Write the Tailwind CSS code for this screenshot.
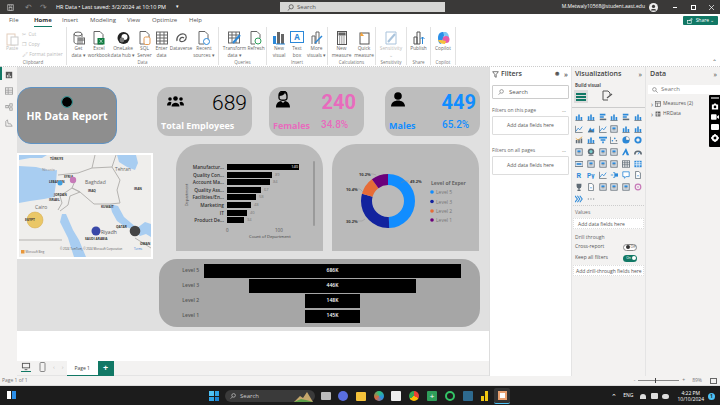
<!DOCTYPE html>
<html lang="en">
<head>
  <meta charset="UTF-8">
  <title>HR Data - Power BI Desktop</title>
  <script src="https://cdn.jsdelivr.net/npm/@tailwindcss/browser@4"></script>
</head>
<body class="w-[720px] h-[405px] overflow-hidden bg-white font-['Open_Sans',sans-serif] text-[#555]">

<!-- Title bar -->
<header class="h-[14px] bg-[#3a3938] flex items-center text-white text-[5.5px] relative">
  <svg class="ml-[7px] w-[7px] h-[7px]" viewBox="0 0 10 10" fill="none" stroke="#bbb"><rect x="1" y="1" width="8" height="8"/><rect x="3" y="5" width="4" height="4"/><path d="M3 1v2h4V1"/></svg>
  <span class="ml-[11px] text-[#888] text-[8px] leading-none">↶</span>
  <span class="ml-[8px] text-[#888] text-[8px] leading-none">↷</span>
  <span class="ml-[9px] w-[120px] whitespace-nowrap">HR Data • Last saved: 3/2/2024 at 10:10 PM</span>
  <span class="text-[5px]">▾</span>
  <div class="absolute left-[280px] top-[2px] w-[165px] h-[10px] bg-[#d6d6d4] flex items-center text-[#555] text-[6px] pl-[7px]">
    <svg class="w-[7px] h-[7px] mr-[3px]" viewBox="0 0 10 10" fill="none" stroke="#444"><circle cx="6" cy="4" r="3"/><path d="M4 6.500 1 9.500"/></svg>Search
  </div>
  <div class="ml-auto flex items-center">
    <span class="text-[5px] whitespace-nowrap">M.Metwaly10568@student.aast.edu</span>
    <svg class="ml-[4px] w-[9px] h-[9px]" viewBox="0 0 10 10"><circle cx="5" cy="5" r="5" fill="#eee"/><circle cx="5" cy="3.800" r="1.800" fill="#3a3938"/><path d="M1.800 8.200c.8-2 5.600-2 6.400 0" fill="#3a3938"/></svg>
    <span class="ml-[15px] w-[4px] h-px bg-white"></span>
    <span class="ml-[14px] w-[5px] h-[5px] border border-white"></span>
    <svg class="ml-[13px] mr-[6px] w-[5px] h-[5px]" viewBox="0 0 5 5" stroke="#fff" stroke-width=".7"><path d="M0 0l5 5M5 0 0 5"/></svg>
  </div>
</header>

<!-- Ribbon -->
<section class="h-[53px] bg-white relative border-b border-dotted border-[#ccc]">
  <nav class="h-[13px] flex items-center text-[6px] text-[#555] relative">
    <span class="absolute left-[9px]">File</span>
    <span class="absolute left-[34px] h-[13px] font-bold text-[#333] border-b border-[#117865] leading-[13px]">Home</span>
    <span class="absolute left-[62px]">Insert</span>
    <span class="absolute left-[90px]">Modeling</span>
    <span class="absolute left-[127px]">View</span>
    <span class="absolute left-[152px]">Optimize</span>
    <span class="absolute left-[189px]">Help</span>
  </nav>
  <div class="absolute right-[2px] top-[2px] w-[35px] h-[9px] bg-[#117865] rounded-[1px] flex items-center justify-center gap-[3px] text-white text-[5px]">
    <svg class="w-[6px] h-[6px]" viewBox="0 0 10 10" fill="none" stroke="#fff"><rect x="1" y="4" width="6" height="5"/><path d="M4 5c0-3 2-3 4-3M7 .5 9 2 7 3.500"/></svg>Share ⌄
  </div>

  <div class="flex h-[38px] text-[4.800px] leading-[6.500px] text-center text-[#666]">
    <!-- Clipboard -->
    <div class="w-[67px] shrink-0 border-r border-[#e2e2e2] relative text-[#bbb]">
      <svg class="absolute left-[6px] top-[5px] w-[13px] h-[14px]" viewBox="0 0 13 14" fill="none" stroke="#e3cdbb"><rect x="1" y="2" width="8" height="11"/><rect x="5" y="5" width="7" height="8" fill="#fff" stroke="#ccc"/></svg>
      <span class="absolute left-[6px] top-[18px]">Paste</span>
      <div class="absolute left-[22px] top-[4px] flex flex-col gap-[3.500px] text-left">
        <span class="whitespace-nowrap">✂ &nbsp;Cut</span>
        <span class="whitespace-nowrap">❐ &nbsp;Copy</span>
        <span class="whitespace-nowrap">🖌 Format painter</span>
      </div>
      <span class="absolute bottom-0 left-0 w-full text-[4.500px] text-[#777]">Clipboard</span>
    </div>
    <!-- Data -->
    <div class="w-[152px] shrink-0 border-r border-[#e2e2e2] relative flex pl-[3px] pt-[4px]">
      <div class="w-[17px] flex flex-col items-center">
        <svg class="w-[12px] h-[14px]" viewBox="0 0 12 14" fill="none" stroke="#666"><ellipse cx="5" cy="3" rx="4" ry="2"/><path d="M1 3v8c0 1 2 2 4 2M9 3v3"/><rect x="5" y="7" width="6.500" height="6"/><path d="M5 9h6M7 7v6M9 7v6"/></svg>
        <span>Get<br>data ▾</span>
      </div>
      <div class="w-[24px] flex flex-col items-center">
        <svg class="w-[12px] h-[14px]" viewBox="0 0 12 14" fill="none" stroke="#666"><path d="M1 .5h6l3 3V13H1z"/><rect x="4.500" y="7" width="7" height="6.500" fill="#107c41" stroke="none"/><path d="M6.500 8.500l3 3.500M9.500 8.500l-3 3.500" stroke="#fff" stroke-width=".6"/></svg>
        <span class="whitespace-nowrap">Excel<br>workbook</span>
      </div>
      <div class="w-[24px] flex flex-col items-center">
        <svg class="w-[13px] h-[14px]" viewBox="0 0 13 14"><circle cx="6.500" cy="7" r="6" fill="#222"/><circle cx="7.500" cy="6" r="3" fill="#fff"/><circle cx="5" cy="9" r="2.400" fill="#777"/></svg>
        <span class="whitespace-nowrap">OneLake<br>data hub ▾</span>
      </div>
      <div class="w-[19px] flex flex-col items-center">
        <svg class="w-[12px] h-[14px]" viewBox="0 0 12 14" fill="none" stroke="#666"><path d="M1 .5h6l3 3V13H1z"/><rect x="5" y="6" width="6" height="7.500" rx="1.500" stroke="#e59a50" fill="#fff"/></svg>
        <span>SQL<br>Server</span>
      </div>
      <div class="w-[15px] flex flex-col items-center">
        <svg class="w-[12px] h-[14px]" viewBox="0 0 12 14" fill="none" stroke="#666"><rect x=".5" y="1" width="11" height="12"/><path d="M.5 4h11M.5 7h11M.5 10h11M4 1v12M8 1v12"/></svg>
        <span>Enter<br>data</span>
      </div>
      <div class="w-[24px] flex flex-col items-center">
        <svg class="w-[13px] h-[14px]" viewBox="0 0 13 14" fill="none" stroke="#555" stroke-width="1.200"><path d="M2 10c-1-4 3-8 7-7 3 1 3 5 0 7-2 1-5 1-4-2 1-2 3-2 4-1"/></svg>
        <span>Dataverse</span>
      </div>
      <div class="w-[22px] flex flex-col items-center">
        <svg class="w-[12px] h-[14px]" viewBox="0 0 12 14" fill="none" stroke="#666"><path d="M1 .5h6l3 3V10"/><path d="M1 .5V13h5"/><circle cx="8.500" cy="10.500" r="3" stroke="#2b88d8" fill="#fff"/></svg>
        <span class="whitespace-nowrap">Recent<br>sources ▾</span>
      </div>
      <span class="absolute bottom-0 left-0 w-full text-[4.500px] text-[#777]">Data</span>
    </div>
    <!-- Queries -->
    <div class="w-[48px] shrink-0 border-r border-[#e2e2e2] relative flex pl-[3px] pt-[4px]">
      <div class="w-[25px] flex flex-col items-center">
        <svg class="w-[13px] h-[14px]" viewBox="0 0 13 14" fill="none" stroke="#666"><rect x=".5" y="1" width="11" height="11"/><path d="M.5 4h11M.5 7h11M4 1v11M8 1v11"/><path d="M5 12 12 4" stroke="#2b88d8" stroke-width="2"/></svg>
        <span class="whitespace-nowrap">Transform<br>data ▾</span>
      </div>
      <div class="w-[18px] flex flex-col items-center">
        <svg class="w-[12px] h-[14px]" viewBox="0 0 12 14" fill="none" stroke="#666"><path d="M1 .5h6l3 3V7M1 .5V13h4"/><circle cx="8" cy="10" r="3" stroke="#2e9e5b"/></svg>
        <span>Refresh</span>
      </div>
      <span class="absolute bottom-0 left-0 w-full text-[4.500px] text-[#777]">Queries</span>
    </div>
    <!-- Insert -->
    <div class="w-[61px] shrink-0 border-r border-[#e2e2e2] relative flex pl-[3px] pt-[4px]">
      <div class="w-[18px] flex flex-col items-center">
        <svg class="w-[12px] h-[14px]" viewBox="0 0 12 14"><rect x="0" y="5" width="3" height="8" fill="#2b88d8"/><rect x="4" y="1" width="3" height="12" fill="#666"/><rect x="8" y="3" width="3" height="10" fill="#666"/><path d="M3 13h9" stroke="#2b88d8"/></svg>
        <span>New<br>visual</span>
      </div>
      <div class="w-[18px] flex flex-col items-center">
        <span class="w-[14px] h-[12px] border border-[#2b88d8] text-[8px] leading-[10px] text-[#2b88d8] font-bold mb-[2px]">A</span>
        <span>Text<br>box</span>
      </div>
      <div class="w-[21px] flex flex-col items-center">
        <svg class="w-[12px] h-[14px]" viewBox="0 0 12 14" fill="none" stroke="#666"><path d="M1 13V5h3v8M5 13V1h3v12"/><path d="M4 12 11 5" stroke="#2b88d8" stroke-width="1.500"/></svg>
        <span class="whitespace-nowrap">More<br>visuals ▾</span>
      </div>
      <span class="absolute bottom-0 left-0 w-full text-[4.500px] text-[#777]">Insert</span>
    </div>
    <!-- Calculations -->
    <div class="w-[48px] shrink-0 border-r border-[#e2e2e2] relative flex pl-[2px] pt-[4px]">
      <div class="w-[23px] flex flex-col items-center">
        <svg class="w-[10px] h-[14px]" viewBox="0 0 10 14" fill="none" stroke="#555"><rect x=".5" y=".5" width="9" height="13"/><rect x="2" y="2" width="6" height="2" fill="#777"/><path d="M2 6h6M2 8h6M2 10h6M2 12h6" stroke-dasharray="1.200 1" stroke-width="1.200"/></svg>
        <span class="whitespace-nowrap">New<br>measure</span>
      </div>
      <div class="w-[22px] flex flex-col items-center">
        <svg class="w-[12px] h-[14px]" viewBox="0 0 12 14" fill="none"><rect x="2" y="2" width="9" height="11" stroke="#555"/><path d="M3 1 6 5H2z" fill="#f2a33c"/></svg>
        <span class="whitespace-nowrap">Quick<br>measure</span>
      </div>
      <span class="absolute bottom-0 left-0 w-full text-[4.500px] text-[#777]">Calculations</span>
    </div>
    <!-- Sensitivity -->
    <div class="w-[31px] shrink-0 border-r border-[#e2e2e2] relative flex flex-col items-center pt-[4px] text-[#bbb]">
      <svg class="w-[12px] h-[14px]" viewBox="0 0 12 14" fill="none" stroke="#a9c3dc"><path d="M1 1h10v12H1z"/><path d="M3 11 10 3" stroke-width="2"/></svg>
      <span>Sensitivity<br>⌄</span>
      <span class="absolute bottom-0 left-0 w-full text-[4.500px] text-[#777]">Sensitivity</span>
    </div>
    <!-- Share -->
    <div class="w-[24px] shrink-0 border-r border-[#e2e2e2] relative flex flex-col items-center pt-[4px]">
      <svg class="w-[12px] h-[14px]" viewBox="0 0 12 14" fill="none" stroke="#555"><path d="M1 13V6h3v7M4 13V1h3v12M1 13h6"/><path d="M9.500 13V6M7.500 8l2-2 2 2" stroke="#2b88d8"/></svg>
      <span>Publish</span>
      <span class="absolute bottom-0 left-0 w-full text-[4.500px] text-[#777]">Share</span>
    </div>
    <!-- Copilot -->
    <div class="w-[25px] shrink-0 border-r border-[#e2e2e2] relative flex flex-col items-center pt-[4px]">
      <svg class="w-[13px] h-[14px]" viewBox="0 0 13 14"><path d="M1 7c0-4 2-6 5-6h2L6 8 4 13C2 13 1 10 1 7z" fill="#2b8fe8"/><path d="M6 1h3c2 1 3 3 3 6L8 7z" fill="#7bc6f5"/><circle cx="9" cy="8.500" r="3.500" fill="#e85ba8"/><path d="M1 9c1 3 4 4 7 4l1-3-5-1z" fill="#f5c23a"/></svg>
      <span>Copilot</span>
      <span class="absolute bottom-0 left-0 w-full text-[4.500px] text-[#777]">Copilot</span>
    </div>
  </div>
  <span class="absolute right-[3px] bottom-[1px] text-[6px] leading-none text-[#555]">⌃</span>
</section>

<!-- Body -->
<main class="h-[309px] flex">
  <!-- Left rail -->
  <aside class="w-[17px] shrink-0 bg-[#f3f2f1] flex flex-col items-center pt-[4px] gap-[8px] relative">
    <span class="absolute left-0 top-0 w-[1.500px] h-[13px] bg-[#117865]"></span>
    <svg class="w-[8px] h-[8px]" viewBox="0 0 10 10"><path d="M1 1h8v8H1z" fill="#555"/><path d="M3 8V5M5 8V3M7 8V6" stroke="#fff"/></svg>
    <svg class="w-[8px] h-[8px]" viewBox="0 0 10 10" fill="none" stroke="#999"><rect x=".5" y="1" width="9" height="8"/><path d="M.5 4h9M.5 6.500h9M4 1v8"/></svg>
    <svg class="w-[8px] h-[8px]" viewBox="0 0 10 10" fill="none" stroke="#999"><rect x="1" y="3" width="3" height="3"/><rect x="6" y="1" width="3" height="3"/><rect x="6" y="6" width="3" height="3"/><path d="M4 4l2-1M4 5l2 2"/></svg>
    <svg class="w-[8px] h-[8px]" viewBox="0 0 10 10" fill="none" stroke="#999"><path d="M1 9h8L7 6H4L3 1 1 3z"/></svg>
  </aside>

  <!-- Report canvas + page tabs -->
  <div class="w-[472px] shrink-0 flex flex-col">
    <div class="h-[264px] bg-[#e0e0e0] relative shrink-0">
      <!-- visuals sit on a free canvas; offsets are relative to (17,67) -->

      <!-- HR card -->
      <div class="absolute left-0 top-[20px] w-[100px] h-[57px] rounded-[14px] bg-[#8e8e8e] border border-[#5f93c4] flex flex-col items-center">
        <span class="mt-[9px] w-[10px] h-[10px] rounded-full bg-black outline outline-1 outline-[#2f8f8f]"></span>
        <span class="mt-[3px] text-white font-bold text-[10.500px] leading-[12px] whitespace-nowrap">HR Data Report</span>
      </div>

      <!-- Total employees -->
      <div class="absolute left-[140px] top-[20px] w-[95px] h-[49px] rounded-[12px] bg-[#bdbdbd]">
        <svg class="absolute left-[10px] top-[9px] w-[17px] h-[11px]" viewBox="0 0 17 11"><circle cx="8.500" cy="2.500" r="2.300"/><path d="M4.500 10.500c0-5 8-5 8 0z"/><circle cx="3" cy="3" r="1.800"/><path d="M0 9.500c0-4 3.500-4.500 4.500-3l-1 3z"/><circle cx="14" cy="3" r="1.800"/><path d="M17 9.500c0-4-3.500-4.500-4.500-3l1 3z"/></svg>
        <span class="absolute right-[5px] top-[3px] text-black text-[21px] leading-[27px] font-['Roboto',sans-serif] font-light">689</span>
        <span class="absolute left-[4px] top-[33px] text-white font-bold text-[9px] leading-[12px] whitespace-nowrap">Total Employees</span>
      </div>

      <!-- Females -->
      <div class="absolute left-[252px] top-[20px] w-[95px] h-[49px] rounded-[12px] bg-[#bdbdbd]">
        <svg class="absolute left-[7px] top-[4px] w-[14px] h-[17px]" viewBox="0 0 14 17"><path d="M3 4c0-5 8-5 8 0v3c0 3-8 3-8 0z" fill="none" stroke="#000" stroke-width="1.300"/><path d="M3 5c3 0 5-1 6-3l2 3V2L7 .5 3 2z"/><path d="M0 16.500c0-5 3-6 5-6.500l2 2 2-2c2 .5 5 1.500 5 6.500z"/></svg>
        <span class="absolute right-[8px] top-[2px] text-[#e86bbd] font-bold text-[20px] leading-[26px] font-['Roboto',sans-serif]">240</span>
        <span class="absolute left-[4px] top-[33px] text-[#e86bbd] font-bold text-[9px] leading-[12px]">Females</span>
        <span class="absolute left-[52px] top-[31px] text-[#e86bbd] font-medium text-[10px] leading-[13px] font-['Roboto',sans-serif]">34.8%</span>
      </div>

      <!-- Males -->
      <div class="absolute left-[368px] top-[20px] w-[95px] h-[49px] rounded-[12px] bg-[#bdbdbd]">
        <svg class="absolute left-[6px] top-[5px] w-[14px] h-[15px]" viewBox="0 0 14 15"><circle cx="7" cy="4" r="3.800"/><path d="M0 14.500c0-8 14-8 14 0z"/></svg>
        <span class="absolute right-[4px] top-[2px] text-[#118dff] font-bold text-[20px] leading-[26px] font-['Roboto',sans-serif]">449</span>
        <span class="absolute left-[4px] top-[33px] text-[#118dff] font-bold text-[9px] leading-[12px]">Males</span>
        <span class="absolute left-[57px] top-[31px] text-[#118dff] font-medium text-[10px] leading-[13px] font-['Roboto',sans-serif]">65.2%</span>
      </div>

      <!-- Map -->
      <div class="absolute left-0 top-[86px] w-[136px] h-[106px] bg-white p-[2px]">
        <svg class="w-[132px] h-[102px] block" viewBox="19 155 132 102" font-family="Open Sans" font-weight="700" font-size="3.200" fill="#333">
          <rect x="19" y="155" width="132" height="102" fill="#efeeec"/>
          <path d="M19 166 36 167 52 171 57 170 56 183 54 197 44 199 30 201 19 203z" fill="#a8cdf1"/>
          <path d="M19 155H47L42 158 30 158 19 160z" fill="#a8cdf1"/>
          <path d="M117 155H136L138 163 135 170 127 167 119 162z" fill="#a8cdf1"/>
          <path d="M62 214 66 214 73 230 79 240 86 257H74L68 238 60 222z" fill="#a8cdf1"/>
          <path d="M110 204 118 206 124 217 137 228 145 222 151 224V237L146 234 140 236 134 230 124 226 117 221 112 212z" fill="#a8cdf1"/>
          <g fill="none" stroke="#b5b3b0" stroke-width="1">
            <path d="M58 175 78 173 92 168 112 167 120 180 117 190 120 203 110 204 94 204 80 192 72 188 75 181"/>
            <path d="M92 168 95 155M112 167 116 155"/>
            <path d="M58 210 62 203 60 196 72 188 80 192 70 196 68 205 60 211"/>
            <path d="M19 240H62M135 238 151 248"/>
          </g>
          <text x="50" y="159.500">TÜRKIYE</text>
          <text x="42" y="171" font-weight="400" fill="#888" font-size="3.800">Nicosia</text>
          <text x="49" y="183">LEBANON</text>
          <text x="64" y="178">SYRIA</text>
          <text x="85" y="184" font-weight="400" fill="#666" font-size="5">Baghdad</text>
          <text x="115" y="171" font-weight="400" fill="#666" font-size="4.800">Tehran</text>
          <text x="88" y="192">IRAQ</text>
          <text x="134" y="190">IRAN</text>
          <text x="54" y="196">JORDAN</text>
          <text x="49" y="200.500">ISRAEL</text>
          <text x="101" y="208">KUWAIT</text>
          <text x="35" y="209" font-weight="400" fill="#666" font-size="5">Cairo</text>
          <circle cx="35" cy="220" r="8" fill="#eac767" stroke="#d4a94a" stroke-width=".5"/>
          <circle cx="60" cy="183" r="2.500" fill="#3f9fe0"/>
          <circle cx="73" cy="180" r="3.200" fill="#c77ab8"/>
          <circle cx="96" cy="231" r="4.500" fill="#3948a8"/>
          <circle cx="135" cy="231" r="5.300" fill="#454545"/>
          <text x="25" y="220.500">EGYPT</text>
          <text x="116" y="228">QATAR</text>
          <text x="101" y="234" font-weight="400" fill="#555" font-size="5">Riyadh</text>
          <text x="85" y="240">SAUDI ARABIA</text>
          <text x="140" y="244.500">OMAN</text>
          <rect x="21" y="250" width="3.500" height="3.500" fill="#e8973b"/>
          <text x="25.500" y="253" font-weight="400" fill="#666" font-size="2.800">Microsoft Bing</text>
          <text x="60" y="250" font-weight="400" fill="#555" font-size="2.800">© 2024 TomTom, © 2024 Microsoft Corporation</text>
          <text x="134" y="250" font-weight="400" fill="#2b7cd3" font-size="2.800">Terms</text>
        </svg>
      </div>

      <!-- Bar chart -->
      <div class="absolute left-[159px] top-[77px] w-[147px] h-[107px] rounded-t-[24px] bg-[#bababa] text-[4.800px] leading-[6px]">
        <span class="absolute left-0 top-[48px] -rotate-90 text-[4px] text-[#555] origin-center">Department</span>
        <div class="absolute left-0 top-[20px] w-[137px] flex flex-col gap-[1.600px]">
          <div class="flex items-center h-[6px]"><span class="w-[48px] text-right font-semibold text-[#333] whitespace-nowrap">Manufactur...</span><span class="ml-[3px] w-[72px] h-[6px] bg-black text-white text-right pr-[1px] text-[4px]">140</span></div>
          <div class="flex items-center h-[6px]"><span class="w-[48px] text-right font-semibold text-[#333] whitespace-nowrap">Quality Con...</span><span class="ml-[3px] w-[45px] h-[6px] bg-black"></span><span class="ml-[3px] text-[#777] text-[4px]">89</span></div>
          <div class="flex items-center h-[6px]"><span class="w-[48px] text-right font-semibold text-[#333] whitespace-nowrap">Account Ma...</span><span class="ml-[3px] w-[43px] h-[6px] bg-black"></span><span class="ml-[3px] text-[#777] text-[4px]">84</span></div>
          <div class="flex items-center h-[6px]"><span class="w-[48px] text-right font-semibold text-[#333] whitespace-nowrap">Quality Ass...</span><span class="ml-[3px] w-[34px] h-[6px] bg-black"></span><span class="ml-[3px] text-[#777] text-[4px]">67</span></div>
          <div class="flex items-center h-[6px]"><span class="w-[48px] text-right font-semibold text-[#333] whitespace-nowrap">Facilities/En...</span><span class="ml-[3px] w-[29px] h-[6px] bg-black"></span><span class="ml-[3px] text-[#777] text-[4px]">58</span></div>
          <div class="flex items-center h-[6px]"><span class="w-[48px] text-right font-semibold text-[#333] whitespace-nowrap">Marketing</span><span class="ml-[3px] w-[24px] h-[6px] bg-black"></span><span class="ml-[3px] text-[#777] text-[4px]">48</span></div>
          <div class="flex items-center h-[6px]"><span class="w-[48px] text-right font-semibold text-[#333] whitespace-nowrap">IT</span><span class="ml-[3px] w-[20px] h-[6px] bg-black"></span><span class="ml-[3px] text-[#777] text-[4px]">40</span></div>
          <div class="flex items-center h-[6px]"><span class="w-[48px] text-right font-semibold text-[#333] whitespace-nowrap">Product De...</span><span class="ml-[3px] w-[17px] h-[6px] bg-black"></span><span class="ml-[3px] text-[#777] text-[4px]">34</span></div>
        </div>
        <span class="absolute left-[137px] top-[17px] w-[2px] h-[65px] bg-[#9a9a9a] rounded-full"></span>
        <span class="absolute left-[50px] top-[83px] text-[4.500px] text-[#555]">0</span>
        <span class="absolute left-[99px] top-[83px] text-[4.500px] text-[#555]">100</span>
        <span class="absolute left-[73px] top-[90px] text-[4.200px] text-[#444] whitespace-nowrap">Count of Department</span>
      </div>

      <!-- Donut -->
      <div class="absolute left-[315px] top-[77px] w-[147px] h-[107px] rounded-t-[24px] bg-[#bababa]">
        <svg class="absolute left-0 top-0 w-[147px] h-[107px]" viewBox="0 0 147 107" font-family="Open Sans">
          <g fill="none" stroke-width="11" transform="rotate(-90 56 57)">
            <circle cx="56" cy="57" r="21.500" pathLength="100" stroke="#118dff" stroke-dasharray="49.2 100" stroke-dashoffset="0"/>
            <circle cx="56" cy="57" r="21.500" pathLength="100" stroke="#12239e" stroke-dasharray="30.2 100" stroke-dashoffset="-49.2"/>
            <circle cx="56" cy="57" r="21.500" pathLength="100" stroke="#e66c37" stroke-dasharray="10.4 100" stroke-dashoffset="-79.4"/>
            <circle cx="56" cy="57" r="21.500" pathLength="100" stroke="#6b007b" stroke-dasharray="10.2 100" stroke-dashoffset="-89.8"/>
          </g>
          <g fill="none" stroke="#888" stroke-width=".4">
            <path d="M69 39l3-2h5M31 48l-3-3h-4M44 31l-3-1h-4M33 75l-3 2h-5"/>
          </g>
          <g font-size="4" font-weight="700" fill="#333">
            <text x="78" y="39">49.2%</text>
            <text x="14" y="47">10.4%</text>
            <text x="27" y="31.500">10.2%</text>
            <text x="14" y="79">30.2%</text>
          </g>
          <text x="99" y="41" font-size="5" font-weight="700" fill="#666">Level of Exper</text>
          <g font-size="5" fill="#777">
            <circle cx="100" cy="48" r="1.800" fill="#118dff"/><text x="104" y="50">Level 5</text>
            <circle cx="100" cy="57.500" r="1.800" fill="#12239e"/><text x="104" y="59.500">Level 3</text>
            <circle cx="100" cy="67" r="1.800" fill="#e66c37"/><text x="104" y="69">Level 2</text>
            <circle cx="100" cy="76" r="1.800" fill="#6b007b"/><text x="104" y="78">Level 1</text>
          </g>
        </svg>
      </div>

      <!-- Funnel -->
      <div class="absolute left-[142px] top-[192px] w-[321px] h-[68px] rounded-[18px] bg-[#a6a6a6] text-[5px] text-[#555] font-semibold">
        <div class="absolute left-0 top-[5px] w-[321px] flex flex-col gap-[1px]">
          <div class="flex items-center h-[14px]"><span class="w-[40px] text-right">Level 5</span><div class="ml-[5px] w-[257px] h-[14px] bg-black text-white flex items-center justify-center">686K</div></div>
          <div class="flex items-center h-[14px]"><span class="w-[40px] text-right">Level 3</span><div class="ml-[50px] w-[167px] h-[14px] bg-black text-white flex items-center justify-center">446K</div></div>
          <div class="flex items-center h-[14px]"><span class="w-[40px] text-right">Level 2</span><div class="ml-[106px] w-[55px] h-[14px] bg-black text-white flex items-center justify-center">148K</div></div>
          <div class="flex items-center h-[14px]"><span class="w-[40px] text-right">Level 1</span><div class="ml-[106px] w-[55px] h-[13px] bg-black text-white flex items-center justify-center">145K</div></div>
        </div>
      </div>
    </div>
    <div class="h-[30px] bg-white shrink-0"></div>
    <!-- Page tabs -->
    <div class="h-[15px] bg-[#f3f2f1] border-b border-[#e4e4e4] flex shrink-0">
      <svg class="ml-[4px] mt-[1px] w-[10px] h-[10px] border-b border-[#117865]" viewBox="0 0 10 10" fill="none" stroke="#555"><rect x="1" y="1.500" width="8" height="5"/><path d="M3.500 8.500h3"/></svg>
      <svg class="ml-[8px] mt-[1px] w-[7px] h-[10px]" viewBox="0 0 7 10" fill="none" stroke="#888"><rect x="1" y=".5" width="5" height="9" rx="1"/></svg>
      <span class="ml-[7px] text-[#bbb] text-[6px] leading-[13px]">‹</span>
      <span class="ml-[7px] text-[#bbb] text-[6px] leading-[13px]">›</span>
      <div class="ml-[3px] w-[31px] h-[15px] bg-white border-b border-[#117865] text-[5px] leading-[14px] text-center text-[#444]">Page 1</div>
      <div class="w-[16px] h-[15px] bg-[#117865] text-white font-bold text-[9px] leading-[14px] text-center">+</div>
    </div>
  </div>

  <!-- Filters pane -->
  <aside class="w-[82px] shrink-0 bg-white relative text-[5px] text-[#555] border-l border-[#ddd]">
    <div class="h-[14px] flex items-center pl-[2px] text-[7px] font-semibold text-[#444]">
      <svg class="w-[7px] h-[7px] mr-[2px]" viewBox="0 0 10 10" fill="none" stroke="#444"><path d="M1 1h8L6 5v4L4 8V5z"/></svg>Filters
      <span class="ml-auto text-[5px] text-[#555]">◉</span>
      <span class="ml-[5px] mr-[3px] text-[7px] leading-none text-[#555]">»</span>
    </div>
    <div class="mx-[2px] mt-[4px] h-[14px] border border-[#ccc] rounded-[1px] flex items-center pl-[5px] text-[6px]">
      <svg class="w-[6px] h-[6px] mr-[5px]" viewBox="0 0 10 10" fill="none" stroke="#666"><circle cx="6" cy="4" r="3"/><path d="M4 6.500 1 9.500"/></svg>Search
    </div>
    <div class="mt-[8px] pl-[2px] pr-[5px] flex justify-between leading-[6px] text-[#666]"><span>Filters on this page</span><span>…</span></div>
    <div class="mx-[2px] mt-[3px] h-[19px] border border-[#ddd] rounded-[1px] flex items-center justify-center">Add data fields here</div>
    <div class="mt-[12px] pl-[2px] pr-[5px] flex justify-between leading-[6px] text-[#666]"><span>Filters on all pages</span><span>…</span></div>
    <div class="mx-[2px] mt-[3px] h-[19px] border border-[#ddd] rounded-[1px] flex items-center justify-center">Add data fields here</div>
  </aside>

  <!-- Visualizations pane -->
  <aside class="w-[75px] shrink-0 bg-[#f3f2f1] border-x border-[#e4e4e4] text-[5px] text-[#555] relative">
    <div class="h-[14px] flex items-center pl-[3px] text-[7px] font-semibold text-[#444]">Visualizations<span class="ml-auto mr-[3px] text-[7px] leading-none font-normal">»</span></div>
    <div class="pl-[3px] font-bold text-[4.500px] leading-[6px] mt-[1px]">Build visual</div>
    <div class="flex items-start h-[19px] pl-[2px] mt-[1px] pt-[1px] border-b border-[#ccc]">
      <span class="w-[14px] h-[13px] bg-[#dcdcdc] flex flex-col items-center justify-center gap-[1px]">
        <span class="w-[10px] h-[2px] bg-[#117865]"></span><span class="w-[10px] h-[2px] bg-[#117865]"></span><span class="w-[10px] h-[2px] bg-[#117865]"></span>
      </span>
      <svg class="ml-[14px] w-[11px] h-[11px]" viewBox="0 0 11 11" fill="none" stroke="#555"><path d="M1 1h5l2 2v2M1 1v9h5"/><path d="M5 8l5-4" stroke-width="1.300"/></svg>
    </div>
    <div id="viz-grid" class="grid grid-cols-6 pl-[1px] pr-[1px] pt-[3px] auto-rows-[11.700px] justify-items-center items-center"></div>
    <div class="border-t border-dotted border-[#ccc] mx-[1px]"></div>
    <div class="pl-[3px] mt-[3px] leading-[6px] text-[#666]">Values</div>
    <div class="mx-[1px] mt-[3px] h-[11px] bg-white border border-dotted border-[#ddd] pl-[4px] leading-[10px]">Add data fields here</div>
    <div class="pl-[3px] mt-[5px] leading-[6px] text-[#666]">Drill through</div>
    <div class="pl-[3px] mt-[4px] h-[7px] flex items-center justify-between pr-[8px]">
      <span>Cross-report</span>
      <span class="w-[14px] h-[7px] rounded-full border border-[#888] bg-white flex items-center pl-[2px] gap-[1px] text-[3.500px]"><span class="w-[3.500px] h-[3.500px] rounded-full bg-[#333]"></span>Off</span>
    </div>
    <div class="pl-[3px] mt-[4px] h-[7px] flex items-center justify-between pr-[8px]">
      <span>Keep all filters</span>
      <span class="w-[14px] h-[7px] rounded-full bg-[#117865] text-white flex items-center justify-end pr-[1px] gap-[1px] text-[3.500px]">On<span class="w-[4px] h-[4px] rounded-full bg-white"></span></span>
    </div>
    <div class="mx-[1px] mt-[3px] h-[11px] bg-white border border-dotted border-[#ddd] pl-[2px] leading-[10px] whitespace-nowrap">Add drill-through fields here</div>
  </aside>

  <!-- Data pane -->
  <aside class="flex-1 bg-[#f3f2f1] text-[5px] text-[#555] relative">
    <div class="h-[14px] flex items-center pl-[4px] text-[7px] font-semibold text-[#444]">Data<span class="ml-auto mr-[3px] text-[7px] leading-none font-normal">»</span></div>
    <div class="ml-[2px] mt-[4px] h-[9px] bg-white flex items-center pl-[4px] text-[6px] text-[#777]">
      <svg class="w-[6px] h-[6px] mr-[3px]" viewBox="0 0 10 10" fill="none" stroke="#666"><circle cx="4" cy="4" r="3"/><path d="M6.500 6.500l3 3"/></svg>Search
    </div>
    <div class="pl-[5px] mt-[5px] h-[10px] flex items-center gap-[2px]">
      <span class="text-[7px] leading-none">›</span>
      <svg class="w-[6px] h-[6px]" viewBox="0 0 10 10" fill="none" stroke="#555"><rect x="1" y="1" width="8" height="8"/><path d="M1 3.500h8M4 3.500V9"/></svg>
      <span>Measures (2)</span>
    </div>
    <div class="pl-[5px] h-[10px] flex items-center gap-[2px]">
      <span class="text-[7px] leading-none">›</span>
      <svg class="w-[6px] h-[6px]" viewBox="0 0 10 10" fill="#555"><rect x="1" y="1" width="8" height="8"/><path d="M1 4h8M1 6.500h8M4 1v8" stroke="#f3f2f1"/></svg>
      <span>HRData</span>
    </div>
    <!-- Floating screen recorder toolbar -->
    <div class="absolute right-0 top-[28px] w-[11px] h-[52px] bg-black rounded-l-[1px] flex flex-col items-center pt-[2px] gap-[4px]">
      <span class="w-[8px] h-[2px] bg-[#888]"></span>
      <svg class="w-[8px] h-[7px]" viewBox="0 0 10 9" fill="#fff"><path d="M1 2h2l1-1.500h2L7 2h2v6.500H1z"/><circle cx="5" cy="5" r="1.700" fill="#000"/></svg>
      <svg class="w-[8px] h-[6px]" viewBox="0 0 10 7" fill="#fff"><rect x="0" y="0" width="7" height="7" rx="1"/><path d="M7.500 3 10 1v5L7.500 4z"/></svg>
      <span class="w-[8px] h-[6px] bg-white rounded-[1px]"></span>
      <svg class="w-[8px] h-[8px]" viewBox="0 0 10 10" fill="#fff"><circle cx="5" cy="5" r="3" fill="none" stroke="#fff" stroke-width="2.400"/><path d="M4 0h2v2H4zM4 8h2v2H4zM0 4h2v2H0zM8 4h2v2H8z"/></svg>
    </div>
  </aside>
</main>

<!-- Status bar -->
<div class="h-[9px] bg-[#f3f2f1] flex items-center text-[5px] text-[#777] pl-[2px] relative">
  Page 1 of 1
  <div class="ml-auto flex items-center mr-[3px] gap-[3px]">
    <span>-</span>
    <span class="w-[41px] h-px bg-[#888] relative"><span class="absolute left-[17px] -top-[2px] w-px h-[5px] bg-[#444]"></span></span>
    <span>+</span>
    <span class="ml-[4px]">89%</span>
    <span class="ml-[5px] w-[7px] h-[6px] border border-[#666]"></span>
  </div>
</div>

<!-- Taskbar -->
<footer class="h-[21px] bg-[#1c1c1c] border-t border-[#ddd] flex items-center relative text-white">
  <div class="absolute left-[7px] top-[5px] flex gap-px">
    <span class="w-[4px] h-[8px] bg-white"></span><span class="w-[4px] h-[8px] bg-[#2b8fe8]"></span>
  </div>
  <div class="absolute left-[209px] top-0 h-[20px] flex items-center">
    <span class="w-[10px] h-[10px] grid grid-cols-2 gap-px"><span class="bg-[#4ec3f7]"></span><span class="bg-[#2fa5e8]"></span><span class="bg-[#2fa5e8]"></span><span class="bg-[#1b86d6]"></span></span>
    <div class="ml-[6px] w-[90px] h-[12px] rounded-full bg-[#3a3a3a] flex items-center pl-[5px] text-[6px] text-[#ccc]">
      <svg class="w-[6px] h-[6px] mr-[4px]" viewBox="0 0 10 10" fill="none" stroke="#ddd"><circle cx="6" cy="4" r="3"/><path d="M4 6.500 1 9.500"/></svg>Search
      <svg class="ml-auto mr-[1px] w-[21px] h-[11px]" viewBox="0 0 21 11"><path d="M1 11 7 5l3 2 4-6 6 10z" fill="#c5a76c"/><path d="M1 11l7-3 5 1 7 2z" fill="#5ea04a"/></svg>
    </div>
    <span class="ml-[6px] w-[10px] h-[8px] bg-[#bbb] rounded-[1px]"></span>
    <span class="ml-[7px] w-[10px] h-[10px] rounded-full bg-[#5a6fe0]"></span>
    <span class="ml-[8px] w-[10px] h-[9px] bg-[#f5c23a] rounded-[1px]"></span>
    <span class="ml-[8px] w-[10px] h-[10px] rounded-full bg-[conic-gradient(#2fc47a,#2b8fe8,#e0663a,#2fc47a)]"></span>
    <span class="ml-[7px] w-[10px] h-[10px] bg-[#eee] rounded-[1px]"></span>
    <span class="ml-[8px] w-[10px] h-[10px] rounded-full bg-[conic-gradient(#ea4335_0_33%,#fbbc05_33%_66%,#34a853_66%)]"></span>
    <span class="ml-[8px] w-[10px] h-[10px] bg-[#2f9e5a] rounded-[1px] text-[8px] leading-[9px] text-center">+</span>
    <span class="ml-[8px] w-[10px] h-[10px] rounded-full border-2 border-[#33c466]"></span>
    <span class="ml-[8px] w-[10px] h-[10px] bg-[#2e6a8f] rounded-[1px]"></span>
    <span class="ml-[8px] w-[10px] h-[10px] flex items-end gap-px"><span class="w-[3px] h-[5px] bg-[#f2c811]"></span><span class="w-[3px] h-[10px] bg-[#f2c811]"></span></span>
    <span class="ml-[3px] w-[16px] h-[16px] bg-[#333] rounded-[2px] flex items-center justify-center border-b border-[#4ec3f7]"><span class="w-[9px] h-[9px] border-2 border-[#e8a070] bg-white"></span></span>
  </div>
  <div class="ml-auto flex items-center text-[5px]">
    <span class="text-[7px] leading-none">⌃</span>
    <span class="ml-[6px]">ENG</span>
    <span class="ml-[7px] w-[6px] h-[5px] bg-[#ddd] rounded-t-full"></span>
    <span class="ml-[5px] w-[7px] h-[6px] bg-[#ddd] rounded-[1px]"></span>
    <span class="ml-[4px] w-[7px] h-[5px] bg-[#ddd] rounded-full"></span>
    <div class="ml-[8px] text-center leading-[6.500px] whitespace-nowrap">4:22 PM<br>10/10/2024</div>
    <span class="ml-[4px] mr-[5px] w-[7px] h-[7px] rounded-full bg-[#4ec3f7] text-[#1c1c1c] text-center text-[5px] leading-[7px] font-bold">1</span>
  </div>
</footer>

<script>
  // Icon grid for the visualizations pane: simple bar/tile marks in the pane's colours
  const vizIcons = [
    "bars","bars","hbars","bars","hbars","bars",
    "line","area","line","tile","bars","bars",
    "combo","bars","funnel","scatter","pie","donut",
    "tile","globe","tile","tile","azure","gauge",
    "card","tile","tile","tile","table","matrix",
    "r","py","line","tree","chat","doc",
    "trophy","doc","tile","tile","tile","ring",
    "more","dots"
  ];
  const blue = "#2b88d8", grey = "#5f6b75";
  const shapes = {
    bars: `<path d="M1 9V4h2v5M4 9V2h2v7M7 9V5h2v4" fill="${blue}"/><path d="M.5 9.500h9" stroke="${grey}"/>`,
    hbars: `<path d="M1 1h7v2H1zM1 4h5v2H1z" fill="${blue}"/><path d="M1 7h8v2H1z" fill="${grey}"/>`,
    line: `<path d="M1 8 4 4l2 2 3-4" fill="none" stroke="${blue}"/><path d="M.5 1v8.500h9" fill="none" stroke="${grey}"/>`,
    area: `<path d="M1 9 4 3l2 3 3-2v5z" fill="${blue}"/><path d="M1 9 4 6l5 3z" fill="${grey}"/>`,
    tile: `<rect x="1" y="1" width="8" height="8" fill="#dfe7ee" stroke="${grey}"/><path d="M3 3h4v2H3z" fill="${blue}"/><path d="M3 6h4" stroke="${grey}"/>`,
    combo: `<path d="M1 9V5h2v4M4 9V4h2v5M7 9V3h2v6" fill="${grey}"/><path d="M1 3l3 2 5-4" fill="none" stroke="#e8a33c"/>`,
    funnel: `<path d="M0 1h10v2H0zM2 4h6v2H2zM4 7h2v2H4z" fill="${blue}"/>`,
    scatter: `<path d="M.5 1v8.500h9" fill="none" stroke="${grey}"/><circle cx="3" cy="6" r="1" fill="${blue}"/><circle cx="6" cy="3" r="1" fill="${blue}"/><circle cx="8" cy="6" r="1" fill="${grey}"/>`,
    pie: `<circle cx="5" cy="5" r="4.500" fill="${blue}"/><path d="M5 5V.5a4.500 4.500 0 0 1 4.500 4.500z" fill="#fff" stroke="${grey}" stroke-width=".5"/>`,
    donut: `<circle cx="5" cy="5" r="3.300" fill="none" stroke="${blue}" stroke-width="2.400"/>`,
    globe: `<circle cx="5" cy="4.500" r="4" fill="${grey}"/><circle cx="5" cy="4.500" r="2" fill="#7cc"/><path d="M2 9.500h6" stroke="${grey}"/>`,
    azure: `<path d="M5 0 9 9H6L4.500 5 2 9H0z" fill="${blue}"/>`,
    gauge: `<path d="M1 8a4 4 0 0 1 8 0" fill="none" stroke="${grey}" stroke-width="2"/><path d="M5 8l2-3" stroke="${blue}"/>`,
    card: `<rect x="0" y="2" width="10" height="6" fill="#dfe7ee" stroke="${grey}"/><path d="M2 5h6" stroke="${blue}" stroke-width="2"/>`,
    table: `<rect x=".5" y="1" width="9" height="8" fill="#fff" stroke="${grey}"/><path d="M.5 3.500h9M.5 6h9M3.500 1v8M6.500 1v8" stroke="${grey}"/>`,
    matrix: `<rect x=".5" y="1" width="9" height="8" fill="${blue}"/><path d="M.5 3.500h9M.5 6h9M3.500 1v8M6.500 1v8" stroke="#fff"/>`,
    r: `<text x="2" y="9" font-size="9" font-weight="700" fill="${blue}">R</text>`,
    py: `<text x="0" y="9" font-size="8" font-weight="700" fill="${blue}">Py</text>`,
    tree: `<path d="M1 5h3M4 2h2v6H4" fill="none" stroke="${blue}"/><rect x="6" y="3" width="4" height="4" fill="${blue}"/>`,
    chat: `<path d="M1 1h8v6H5L3 9V7H1z" fill="#fff" stroke="${blue}"/>`,
    doc: `<path d="M2 .5h4l2 2v7H2z" fill="#fff" stroke="${grey}"/><path d="M4 6h2" stroke="${blue}"/>`,
    trophy: `<path d="M2 1h6v3a3 3 0 0 1-6 0zM4 7h2v1H4zM3 8.500h4V10H3z" fill="${grey}"/>`,
    ring: `<circle cx="5" cy="5" r="3.500" fill="none" stroke="#c77ab8" stroke-width="1.500"/><circle cx="5" cy="5" r="1" fill="#c77ab8"/>`,
    more: `<path d="M0 1l3 4-3 4M3 1l3 4-3 4M6 1l3 4-3 4" fill="none" stroke="${blue}" stroke-width="1.300"/>`,
    dots: `<path d="M1 5h1.500M4.200 5h1.500M7.500 5H9" stroke="${grey}"/>`
  };
  const vizGrid = document.getElementById("viz-grid");
  vizIcons.forEach((name) => {
    vizGrid.insertAdjacentHTML("beforeend",
      `<svg width="8" height="8" viewBox="0 0 10 10" font-family="Roboto">${shapes[name]}</svg>`);
  });
</script>
</body>
</html>
